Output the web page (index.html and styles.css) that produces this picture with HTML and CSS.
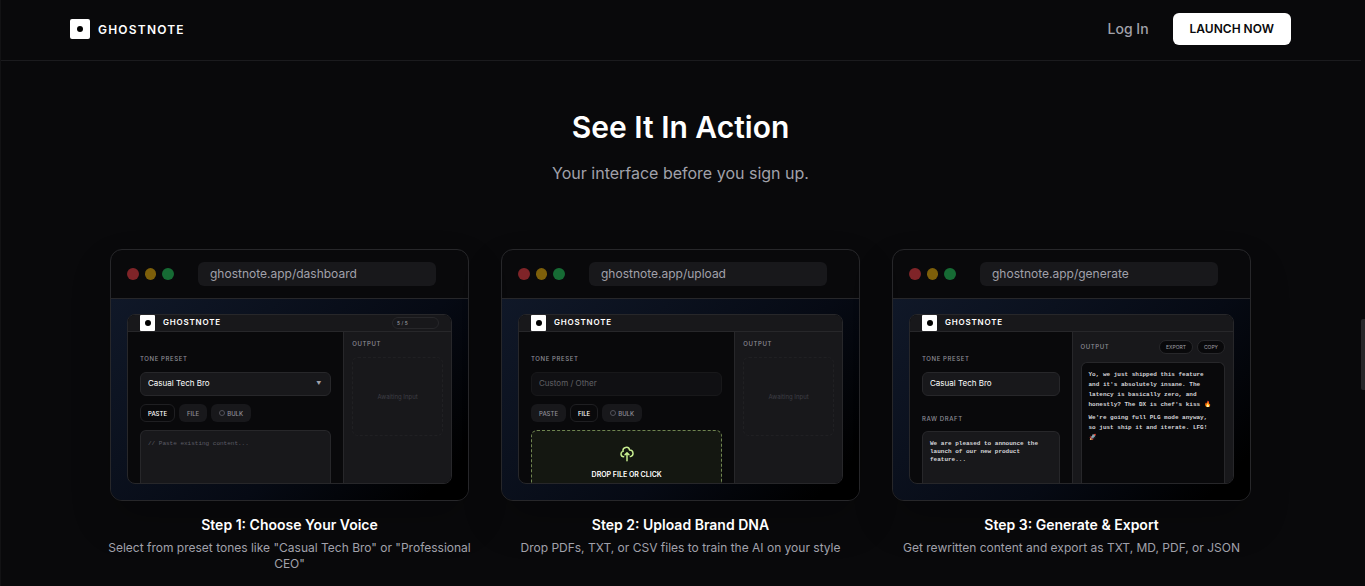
FILE: index.html
```html
<!doctype html>
<html lang="en">
  <head>
    <meta charset="UTF-8" />
    <meta name="viewport" content="width=device-width, initial-scale=1.0" />
    <title>Ghostnote</title>
    <link rel="stylesheet" href="styles.css">
  </head>
  <body>
    <header class="site-header">
      <nav class="nav">
        <a class="brand" href="#">
          <span class="brand-mark"></span>
          <span class="brand-name">GHOSTNOTE</span>
        </a>
        <div class="nav-actions">
          <a class="login" href="#">Log In</a>
          <button class="launch-btn" type="button">LAUNCH NOW</button>
        </div>
      </nav>
    </header>

    <main class="demo">
      <h2>See It In Action</h2>
      <p class="subtitle">Your interface before you sign up.</p>

      <div class="steps">
        <!-- Step 1 -->
        <article class="step">
          <div class="browser">
            <div class="chrome">
              <div class="dots"><span class="dot red"></span><span class="dot yellow"></span><span class="dot green"></span></div>
              <input class="url" type="text" value="ghostnote.app/dashboard" aria-label="Address" readonly>
            </div>
            <div class="viewport">
              <div class="app">
                <div class="app-bar">
                  <span class="app-mark"></span>
                  <span class="app-name">GHOSTNOTE</span>
                  <span class="quota">5 / 5</span>
                </div>
                <div class="panes">
                  <div class="pane editor">
                    <label class="label" for="tone1">TONE PRESET</label>
                    <div class="select-wrap">
                      <select class="field" id="tone1"><option>Casual Tech Bro</option></select>
                      <span class="arrow">▼</span>
                    </div>
                    <div class="tabs">
                      <button class="tab active" type="button">PASTE</button>
                      <button class="tab" type="button">FILE</button>
                      <button class="tab" type="button"><span class="ring"></span>BULK</button>
                    </div>
                    <textarea class="draft" aria-label="Content" placeholder="// Paste existing content..."></textarea>
                  </div>
                  <div class="pane output">
                    <span class="label">OUTPUT</span>
                    <div class="awaiting">Awaiting Input</div>
                  </div>
                </div>
              </div>
            </div>
          </div>
          <h3>Step 1: Choose Your Voice</h3>
          <p>Select from preset tones like "Casual Tech Bro" or "Professional CEO"</p>
        </article>

        <!-- Step 2 -->
        <article class="step">
          <div class="browser">
            <div class="chrome">
              <div class="dots"><span class="dot red"></span><span class="dot yellow"></span><span class="dot green"></span></div>
              <input class="url" type="text" value="ghostnote.app/upload" aria-label="Address" readonly>
            </div>
            <div class="viewport">
              <div class="app">
                <div class="app-bar">
                  <span class="app-mark"></span>
                  <span class="app-name">GHOSTNOTE</span>
                </div>
                <div class="panes">
                  <div class="pane editor">
                    <label class="label" for="tone2">TONE PRESET</label>
                    <div class="select-wrap">
                      <select class="field" id="tone2" disabled><option>Custom / Other</option></select>
                    </div>
                    <div class="tabs">
                      <button class="tab" type="button">PASTE</button>
                      <button class="tab active" type="button">FILE</button>
                      <button class="tab" type="button"><span class="ring"></span>BULK</button>
                    </div>
                    <button class="dropzone" type="button">
                      <svg class="upload-icon" viewBox="0 0 24 24" fill="none" stroke="currentColor" stroke-width="2.2" stroke-linecap="round" stroke-linejoin="round">
                        <path d="M7 16a4 4 0 0 1-.88-7.9A5 5 0 1 1 15.9 6h.1a5 5 0 0 1 1 9.9" />
                        <path d="M15 13l-3-3-3 3M12 10v12" />
                      </svg>
                      DROP FILE OR CLICK
                    </button>
                  </div>
                  <div class="pane output">
                    <span class="label">OUTPUT</span>
                    <div class="awaiting">Awaiting Input</div>
                  </div>
                </div>
              </div>
            </div>
          </div>
          <h3>Step 2: Upload Brand DNA</h3>
          <p>Drop PDFs, TXT, or CSV files to train the AI on your style</p>
        </article>

        <!-- Step 3 -->
        <article class="step">
          <div class="browser">
            <div class="chrome">
              <div class="dots"><span class="dot red"></span><span class="dot yellow"></span><span class="dot green"></span></div>
              <input class="url" type="text" value="ghostnote.app/generate" aria-label="Address" readonly>
            </div>
            <div class="viewport">
              <div class="app">
                <div class="app-bar">
                  <span class="app-mark"></span>
                  <span class="app-name">GHOSTNOTE</span>
                </div>
                <div class="panes even">
                  <div class="pane editor">
                    <label class="label" for="tone3">TONE PRESET</label>
                    <div class="select-wrap">
                      <select class="field" id="tone3"><option>Casual Tech Bro</option></select>
                    </div>
                    <label class="label raw" for="raw">RAW DRAFT</label>
                    <textarea class="draft filled" id="raw">We are pleased to announce the launch of our new product feature...</textarea>
                  </div>
                  <div class="pane output">
                    <div class="output-bar">
                      <span class="label">OUTPUT</span>
                      <button class="pill" type="button">EXPORT</button>
                      <button class="pill" type="button">COPY</button>
                    </div>
                    <div class="result">
                      <p>Yo, we just shipped this feature and it's absolutely insane. The latency is basically zero, and honestly? The DX is chef's kiss 🔥</p>
                      <p>We're going full PLG mode anyway, so just ship it and iterate. LFG! 🚀</p>
                    </div>
                  </div>
                </div>
              </div>
            </div>
          </div>
          <h3>Step 3: Generate &amp; Export</h3>
          <p>Get rewritten content and export as TXT, MD, PDF, or JSON</p>
        </article>
      </div>
    </main>
    <div class="scroll-thumb"></div>
  </body>
</html>
```
FILE: styles.css
```css
* {
  box-sizing: border-box;
}
html {
  background-color: #09090b;
}
body {
  margin: 0 4px 0 0;
  height: 100vh;
  overflow: hidden;
  border-left: 1px solid #121214;
  background-color: #09090b;
  color: #fff;
  font-family: Inter, "Liberation Sans", sans-serif;
}
button, input, select, textarea {
  font-family: inherit;
  margin: 0;
}
h2, h3, p {
  margin: 0;
}

/* header */
.site-header {
  border-bottom: 1px solid #1b1b1e;
}
.nav {
  display: flex;
  justify-content: space-between;
  align-items: center;
  height: 60px;
  padding: 0 70px 2px 69px;
}
.nav a {
  text-decoration: none;
}
.brand {
  display: flex;
  align-items: center;
  gap: 8px;
  color: #fff;
}
.brand-mark, .app-mark {
  display: flex;
  align-items: center;
  justify-content: center;
  background-color: #fff;
}
.brand-mark {
  width: 20px;
  height: 20px;
  border-radius: 2px;
}
.brand-mark::after, .app-mark::after {
  content: "";
  width: 6px;
  height: 6px;
  border-radius: 50%;
  background-color: #000;
}
.brand-name {
  font-size: 12px;
  font-weight: 600;
  letter-spacing: 0.1em;
}
.nav-actions {
  display: flex;
  align-items: center;
  gap: 24px;
}
.login {
  padding-bottom: 2px;
  color: #a1a1aa;
  font-size: 14px;
  font-weight: 500;
}
.launch-btn {
  height: 32px;
  padding: 0 17px 2px;
  border: none;
  border-radius: 6px;
  background-color: #fff;
  color: #09090b;
  font-size: 12px;
  font-weight: 600;
  cursor: pointer;
}

/* demo section */
.demo {
  padding: 48px 110px 0 109px;
  text-align: center;
}
.demo h2 {
  font-size: 30px;
  line-height: 36px;
  font-weight: 600;
}
.subtitle {
  margin-top: 16px;
  color: #a1a1aa;
  font-size: 16px;
  line-height: 24px;
}
.steps {
  display: grid;
  grid-template-columns: repeat(3, 1fr);
  gap: 32px;
  margin-top: 64px;
}
.step h3 {
  margin-top: 14px;
  font-size: 14px;
  line-height: 20px;
  font-weight: 600;
}
.step > p {
  margin: 5px -4px 0;
  color: #a1a1aa;
  font-size: 12px;
  line-height: 16px;
}

/* browser frame */
.browser {
  overflow: hidden;
  border: 1px solid #27272a;
  border-radius: 12px;
  box-shadow: 0 20px 40px rgba(0, 0, 0, 0.2);
}
.chrome {
  display: flex;
  align-items: center;
  padding: 12px 16px;
  border-bottom: 1px solid #27272a;
}
.dots {
  display: flex;
  flex: none;
  gap: 6px;
  width: 47px;
}
.dot {
  width: 12px;
  height: 12px;
  border-radius: 50%;
}
.dot.red {
  background-color: #7f2428;
}
.dot.yellow {
  background-color: #7d5f0a;
}
.dot.green {
  background-color: #166b34;
}
.url {
  flex: 1;
  min-width: 0;
  height: 24px;
  margin: 0 16px 0 24px;
  padding: 0 12px 2px;
  border: none;
  border-radius: 6px;
  background-color: #18181b;
  color: #a1a1aa;
  font-size: 12px;
}
.viewport {
  aspect-ratio: 16 / 9;
  padding: 15px 16px 16px;
  background: linear-gradient(135deg, #101828, #060a14 60%, #000 92%);
}

/* mini app */
.app {
  display: flex;
  flex-direction: column;
  height: 100%;
  overflow: hidden;
  border: 1px solid #27272a;
  border-radius: 8px;
  background-color: #09090b;
  text-align: left;
}
.app-bar {
  display: flex;
  flex: none;
  align-items: center;
  gap: 8px;
  height: 17px;
  padding: 0 12px;
  border-bottom: 1px solid #27272a;
  background-color: #18181b;
}
.app-mark {
  width: 15px;
  height: 16px;
  border-radius: 1px;
}
.app-name {
  padding-bottom: 2px;
  font-size: 8px;
  line-height: 12px;
  font-weight: 600;
  letter-spacing: 0.1em;
}
.quota {
  width: 47px;
  height: 12px;
  margin-left: auto;
  padding: 0 4px;
  border: 1px solid #27272a;
  border-radius: 6px;
  color: #a1a1aa;
  font-size: 5px;
  line-height: 10px;
}
.panes {
  display: grid;
  flex: 1;
  grid-template-columns: 2fr 1fr;
  min-height: 0;
}
.panes.even {
  grid-template-columns: 1fr 1fr;
}
.pane {
  display: flex;
  flex-direction: column;
  min-width: 0;
  min-height: 0;
}
.editor {
  padding: 23px 12px 0;
}
.output {
  padding: 8px 8px 0;
  border-left: 1px solid #27272a;
  background-color: #18181b;
}
.label {
  color: #8e8e97;
  font-size: 6px;
  line-height: 8px;
  font-weight: 500;
  letter-spacing: 0.1em;
}
.label.raw {
  margin-top: 19px;
}
.select-wrap {
  position: relative;
  margin-top: 9px;
}
.field {
  display: block;
  appearance: none;
  width: 100%;
  height: 24px;
  padding: 0 7px 2px;
  border: 1px solid #27272a;
  border-radius: 6px;
  background-color: #18181b;
  color: #fff;
  font-size: 8px;
}
.field:disabled {
  opacity: 0.5;
  color: #b4b4bc;
}
.arrow {
  position: absolute;
  top: 7px;
  right: 10px;
  color: #a1a1aa;
  font-size: 5px;
  line-height: 8px;
}
.tabs {
  display: flex;
  gap: 4px;
  margin-top: 8px;
}
.tab {
  display: flex;
  align-items: center;
  height: 18px;
  padding: 0 8px;
  border: none;
  border-radius: 6px;
  background-color: #18181b;
  color: #8e8e97;
  font-size: 6px;
  font-weight: 500;
}
.tab.active {
  padding: 0 7px;
  border: 1px solid #1f1f22;
  background-color: #09090b;
  color: #fff;
}
.ring {
  width: 6px;
  height: 6px;
  margin-right: 2px;
  border: 1px solid #52525b;
  border-radius: 50%;
}
.draft {
  flex: 1;
  min-height: 0;
  margin-top: 8px;
  padding: 9px 7px 0;
  border: 1px solid #27272a;
  border-bottom: none;
  border-radius: 6px 6px 0 0;
  background-color: #18181b;
  color: #d4d4d8;
  font-family: "Liberation Mono", monospace;
  font-size: 6px;
  line-height: 8px;
  resize: none;
  overflow: hidden;
}
.draft::placeholder {
  color: #5d5d66;
}
.draft.filled {
  padding-top: 8px;
  font-weight: 600;
}
.dropzone {
  display: flex;
  flex: 1;
  flex-direction: column;
  align-items: center;
  gap: 9px;
  min-height: 0;
  margin-top: 8px;
  padding: 15px 0 0;
  border: 1px dashed #6f8450;
  border-bottom: none;
  border-radius: 6px 6px 0 0;
  background-color: #141711;
  color: #fff;
  font-size: 7px;
  line-height: 8px;
  font-weight: 600;
}
.upload-icon {
  flex: none;
  width: 16px;
  height: 16px;
  color: #c8ee90;
}
.awaiting {
  display: flex;
  align-items: center;
  justify-content: center;
  height: 79px;
  margin-top: 9px;
  border: 1px dashed #202023;
  border-radius: 6px;
  color: #3f3f46;
  font-size: 6px;
}
.output-bar {
  display: flex;
  gap: 4px;
}
.output-bar .label {
  margin-right: auto;
  line-height: 13px;
}
.pill {
  height: 14px;
  padding: 0 6px;
  border: 1px solid #27272a;
  border-radius: 7px;
  background-color: #09090b;
  color: #a1a1aa;
  font-size: 5px;
}
.result {
  flex: 1;
  min-height: 0;
  margin-top: 8px;
  padding: 7px 7px 0;
  border: 1px solid #27272a;
  border-bottom: none;
  border-radius: 6px 6px 0 0;
  background-color: #09090b;
  color: #d4d4d8;
  font-family: "Liberation Mono", monospace;
  font-size: 6px;
  line-height: 10px;
  font-weight: 600;
}
.result p + p {
  margin-top: 3px;
}

.scroll-thumb {
  position: fixed;
  top: 319px;
  right: 0;
  width: 4px;
  height: 71px;
  border-radius: 2px 0 0 2px;
  background-color: #27272a;
}
```
